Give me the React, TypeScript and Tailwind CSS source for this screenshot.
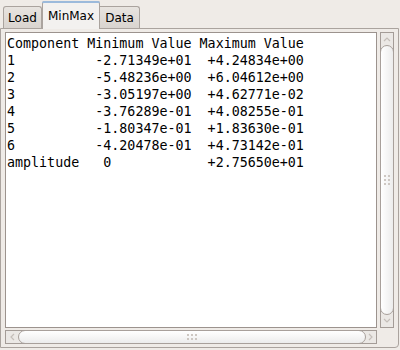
import React from "react";

const lines = [
  "Component Minimum Value Maximum Value",
  "1          -2.71349e+01  +4.24834e+00",
  "2          -5.48236e+00  +6.04612e+00",
  "3          -3.05197e+00  +4.62771e-02",
  "4          -3.76289e-01  +4.08255e-01",
  "5          -1.80347e-01  +1.83630e-01",
  "6          -4.20478e-01  +4.73142e-01",
  "amplitude   0            +2.75650e+01",
];

function Dots({ cols, rows }: { cols: number; rows: number }) {
  const items = [];
  for (let i = 0; i < cols * rows; i++) {
    items.push(<div key={i} className="w-[2px] h-[2px] bg-[#cdc7c2]" />);
  }
  return (
    <div
      className={`grid gap-[2px] ${cols === 2 ? "grid-cols-2" : "grid-cols-3"}`}
    >
      {items}
    </div>
  );
}

function Chevron({ dir }: { dir: "up" | "down" | "left" | "right" }) {
  const d =
    dir === "up"
      ? "M1 5 L4 2 L7 5"
      : dir === "down"
      ? "M1 2 L4 5 L7 2"
      : dir === "left"
      ? "M5 1 L2 4 L5 7"
      : "M2 1 L5 4 L2 7";
  return (
    <svg width="8" height="8" viewBox="0 0 8 8">
      <path d={d} fill="none" stroke="#c4beb9" strokeWidth="1.2" />
    </svg>
  );
}

export default function App() {
  return (
    <div
      className="w-[400px] h-[350px] bg-[#efebe7] overflow-hidden"
      style={{ fontFamily: '"DejaVu Sans", sans-serif' }}
    >
      {/* tab bar */}
      <div className="h-[28px] flex items-end pl-[3px] text-[12px] text-black">
        <div className="w-[39px] h-[22px] border border-b-0 border-[#aaa39e] rounded-t-[3px] bg-gradient-to-b from-[#e8e4e0] to-[#d9d4cf] flex items-center justify-center">
          Load
        </div>
        <div className="relative z-10 -mb-px w-[58px] h-[28px] border border-b-0 border-[#aaa39e] rounded-t-[3px] bg-[#f3f1ef] flex flex-col">
          <div className="h-[2px] mx-[-1px] mt-[-1px] rounded-t-[3px] bg-[#9cbadb]" />
          <div className="flex-1 flex items-center justify-center pb-[1px]">
            MinMax
          </div>
        </div>
        <div className="w-[40px] h-[22px] border border-b-0 border-l-0 border-[#aaa39e] rounded-tr-[3px] bg-gradient-to-b from-[#e8e4e0] to-[#d9d4cf] flex items-center justify-center">
          Data
        </div>
      </div>

      {/* panel */}
      <div className="w-[399px] h-[320px] border border-[#aaa39e] rounded-br-[4px] bg-[#efebe7] pt-[3px] pl-[4px] pr-[4px] pb-[3px] flex flex-col">
        <div className="flex gap-[3px]">
          {/* text box */}
          <div
            className="w-[372px] h-[296px] border border-[#9c938e] bg-white pt-[2px] pl-[1px] text-[13.33px] leading-[17px] text-black whitespace-pre"
            style={{ fontFamily: '"DejaVu Sans Mono", monospace' }}
          >
            {lines.map((l, i) => (
              <div key={i}>{l}</div>
            ))}
          </div>
          {/* vertical scrollbar */}
          <div className="w-[14px] h-[296px] border border-[#a49c97] bg-[#ebe8e5] flex flex-col">
            <div className="h-[12px] flex items-center justify-center pt-[2px]">
              <Chevron dir="up" />
            </div>
            <div className="flex-1 -mx-px border border-[#a8a09b] rounded-[7px] bg-gradient-to-r from-[#ffffff] to-[#ececec] flex items-center justify-center">
              <Dots cols={2} rows={3} />
            </div>
            <div className="h-[12px] flex items-center justify-center">
              <Chevron dir="down" />
            </div>
          </div>
        </div>
        {/* horizontal scrollbar */}
        <div className="mt-[2px] w-[372px] h-[14px] border border-[#a49c97] bg-[#ebe8e5] flex">
          <div className="w-[12px] flex items-center justify-center pl-[1px]">
            <Chevron dir="left" />
          </div>
          <div className="flex-1 -my-px border border-[#a8a09b] rounded-[7px] bg-gradient-to-b from-[#ffffff] to-[#ececec] flex items-center justify-center">
            <Dots cols={3} rows={2} />
          </div>
          <div className="w-[10px] flex items-center justify-center">
            <Chevron dir="right" />
          </div>
        </div>
      </div>
    </div>
  );
}
